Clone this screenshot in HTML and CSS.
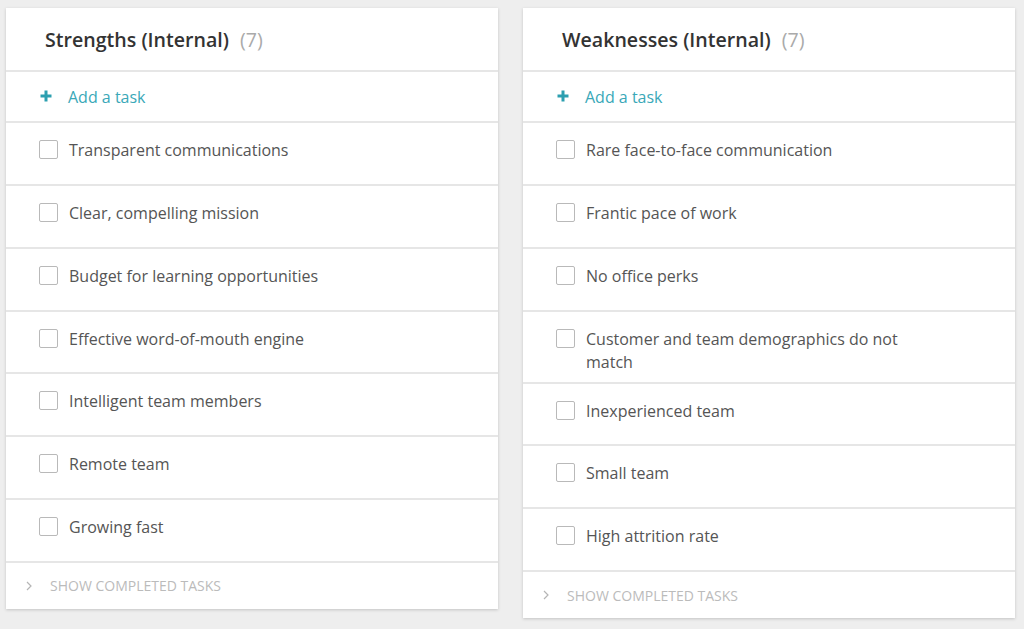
FILE: index.html
```html
<!DOCTYPE html>
<html>
<head>
<meta charset="utf-8">
<link rel="stylesheet" href="styles.css">
</head>
<body>
<div class="board">
  <section class="card">
    <header class="card-head"><h2 class="title">Strengths (Internal)</h2><span class="count">(7)</span></header>
    <div class="add-row">
      <svg class="plus" width="12" height="12" viewBox="0 0 12 12"><path d="M6 0.5v11M0.5 6h11" stroke="#2c9fb0" stroke-width="3"/></svg>
      <span class="add-text">Add a task</span>
    </div>
    <ul class="tasks">
      <li class="task"><span class="box"></span><span class="label">Transparent communications</span></li>
      <li class="task"><span class="box"></span><span class="label">Clear, compelling mission</span></li>
      <li class="task"><span class="box"></span><span class="label">Budget for learning opportunities</span></li>
      <li class="task"><span class="box"></span><span class="label">Effective word-of-mouth engine</span></li>
      <li class="task"><span class="box"></span><span class="label">Intelligent team members</span></li>
      <li class="task"><span class="box"></span><span class="label">Remote team</span></li>
      <li class="task"><span class="box"></span><span class="label">Growing fast</span></li>
    </ul>
    <div class="completed">
      <svg class="chev" width="6" height="10" viewBox="0 0 6 10"><path d="M1 1l4 4-4 4" fill="none" stroke="#b5b5b5" stroke-width="1.2"/></svg>
      <span>SHOW COMPLETED TASKS</span>
    </div>
  </section>
  <section class="card">
    <header class="card-head"><h2 class="title">Weaknesses (Internal)</h2><span class="count">(7)</span></header>
    <div class="add-row">
      <svg class="plus" width="12" height="12" viewBox="0 0 12 12"><path d="M6 0.5v11M0.5 6h11" stroke="#2c9fb0" stroke-width="3"/></svg>
      <span class="add-text">Add a task</span>
    </div>
    <ul class="tasks">
      <li class="task"><span class="box"></span><span class="label">Rare face-to-face communication</span></li>
      <li class="task"><span class="box"></span><span class="label">Frantic pace of work</span></li>
      <li class="task"><span class="box"></span><span class="label">No office perks</span></li>
      <li class="task"><span class="box"></span><span class="label">Customer and team demographics do not match</span></li>
      <li class="task"><span class="box"></span><span class="label">Inexperienced team</span></li>
      <li class="task"><span class="box"></span><span class="label">Small team</span></li>
      <li class="task"><span class="box"></span><span class="label">High attrition rate</span></li>
    </ul>
    <div class="completed">
      <svg class="chev" width="6" height="10" viewBox="0 0 6 10"><path d="M1 1l4 4-4 4" fill="none" stroke="#b5b5b5" stroke-width="1.2"/></svg>
      <span>SHOW COMPLETED TASKS</span>
    </div>
  </section>
</div>
</body>
</html>
```
FILE: styles.css
```css
* { box-sizing: border-box; }
html, body { margin: 0; padding: 0; }
body {
  background: #eeeeee;
  font-family: "Open Sans", "Noto Sans", sans-serif;
  width: 1024px;
  height: 629px;
  overflow: hidden;
}
.board {
  display: flex;
  align-items: flex-start;
  gap: 25px;
  padding: 8px 0 0 6px;
}
.card {
  width: 492px;
  background: #fff;
  box-shadow: 0 1px 3px rgba(0,0,0,0.18);
}
.card-head {
  height: 64px;
  display: flex;
  align-items: center;
  padding: 0 0 0 39px;
  border-bottom: 2px solid #e6e6e6;
}
.title {
  margin: 0;
  font-size: 19.6px;
  font-weight: 600;
  color: #333;
}
.count {
  margin-left: 11px;
  font-size: 19.6px;
  color: #aaa;
  font-weight: 400;
}
.add-row {
  height: 51px;
  display: flex;
  align-items: center;
  padding-left: 34px;
  border-bottom: 2px solid #e6e6e6;
}
.plus { margin-right: 16px; margin-top: -1px; }
.add-text {
  color: #3aa8b8;
  font-size: 16px;
}
.tasks { list-style: none; margin: 0; padding: 0; }
.task {
  display: flex;
  align-items: flex-start;
  min-height: 62.85px;
  padding: 16px 0 8px 33px;
  border-bottom: 2px solid #e6e6e6;
}
.box {
  flex: none;
  width: 19px;
  height: 19px;
  border: 1.5px solid #b9b9b9;
  border-radius: 2px;
  margin-top: 1px;
  margin-right: 11px;
}
.label {
  font-size: 16px;
  line-height: 23px;
  color: #555;
  max-width: 345px;
}
.completed {
  height: 46px;
  display: flex;
  align-items: center;
  padding-left: 20px;
  color: #bbbbbb;
  font-size: 14px;
}
.chev { margin-right: 18px; }
```
